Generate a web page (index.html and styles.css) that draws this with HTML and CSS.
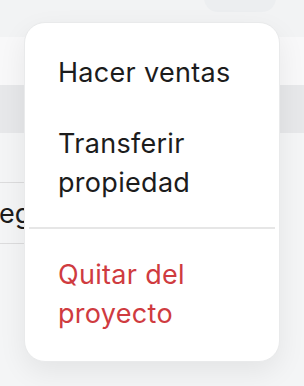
FILE: index.html
```html
<!DOCTYPE html>
<html>
<head>
<meta charset="utf-8">
<link rel="stylesheet" href="styles.css">
</head>
<body>
<div class="page">
  <div class="topbar"><div class="pill"></div></div>
  <div class="band-light"></div>
  <div class="band-gray"></div>
  <div class="gap"></div>
  <div class="row"><span class="row-text">eg</span></div>
</div>
<div class="menu">
  <div class="item">Hacer ventas</div>
  <div class="item">Transferir<br>propiedad</div>
  <div class="divider"></div>
  <div class="item danger">Quitar del<br>proyecto</div>
</div>
</body>
</html>
```
FILE: styles.css
```css
html, body {
  margin: 0;
  padding: 0;
}
body {
  width: 304px;
  height: 386px;
  overflow: hidden;
  background: #f4f5f6;
  font-family: Inter, "Noto Sans", sans-serif;
  position: relative;
}
.page {
  display: flex;
  flex-direction: column;
}
.topbar {
  height: 37px;
  background: #f2f3f4;
  display: flex;
  justify-content: flex-end;
}
.pill {
  width: 72px;
  height: 14px;
  margin-top: -2px;
  margin-right: 28px;
  background: #eceef0;
  border-radius: 0 0 16px 16px;
}
.band-light {
  height: 48px;
  background: #f8f8f9;
}
.band-gray {
  height: 48px;
  background: #e7e8ea;
}
.gap {
  height: 49px;
}
.row {
  height: 60px;
  border-top: 1px solid #dcdcdd;
  border-bottom: 1px solid #dcdcdd;
  display: flex;
  align-items: center;
  width: 30px;
  overflow: hidden;
}
.row-text {
  font-size: 27px;
  color: #1c1c1c;
  margin-left: -1px;
}
.menu {
  position: absolute;
  left: 24px;
  top: 22px;
  width: 256px;
  height: 340px;
  box-sizing: border-box;
  background: #ffffff;
  border-radius: 21px;
  border: 1px solid #e9eaeb;
  box-shadow: 0 10px 28px rgba(0, 0, 0, 0.07);
  padding: 14px 0 0;
}
.item {
  padding: 16px 33px;
  font-size: 27px;
  line-height: 39px;
  letter-spacing: 0.3px;
  color: #1c1c1c;
}
.divider {
  height: 2px;
  background: #e6e6e6;
  margin: 9px 4px 10px;
}
.danger {
  color: #cf3b40;
}
```
